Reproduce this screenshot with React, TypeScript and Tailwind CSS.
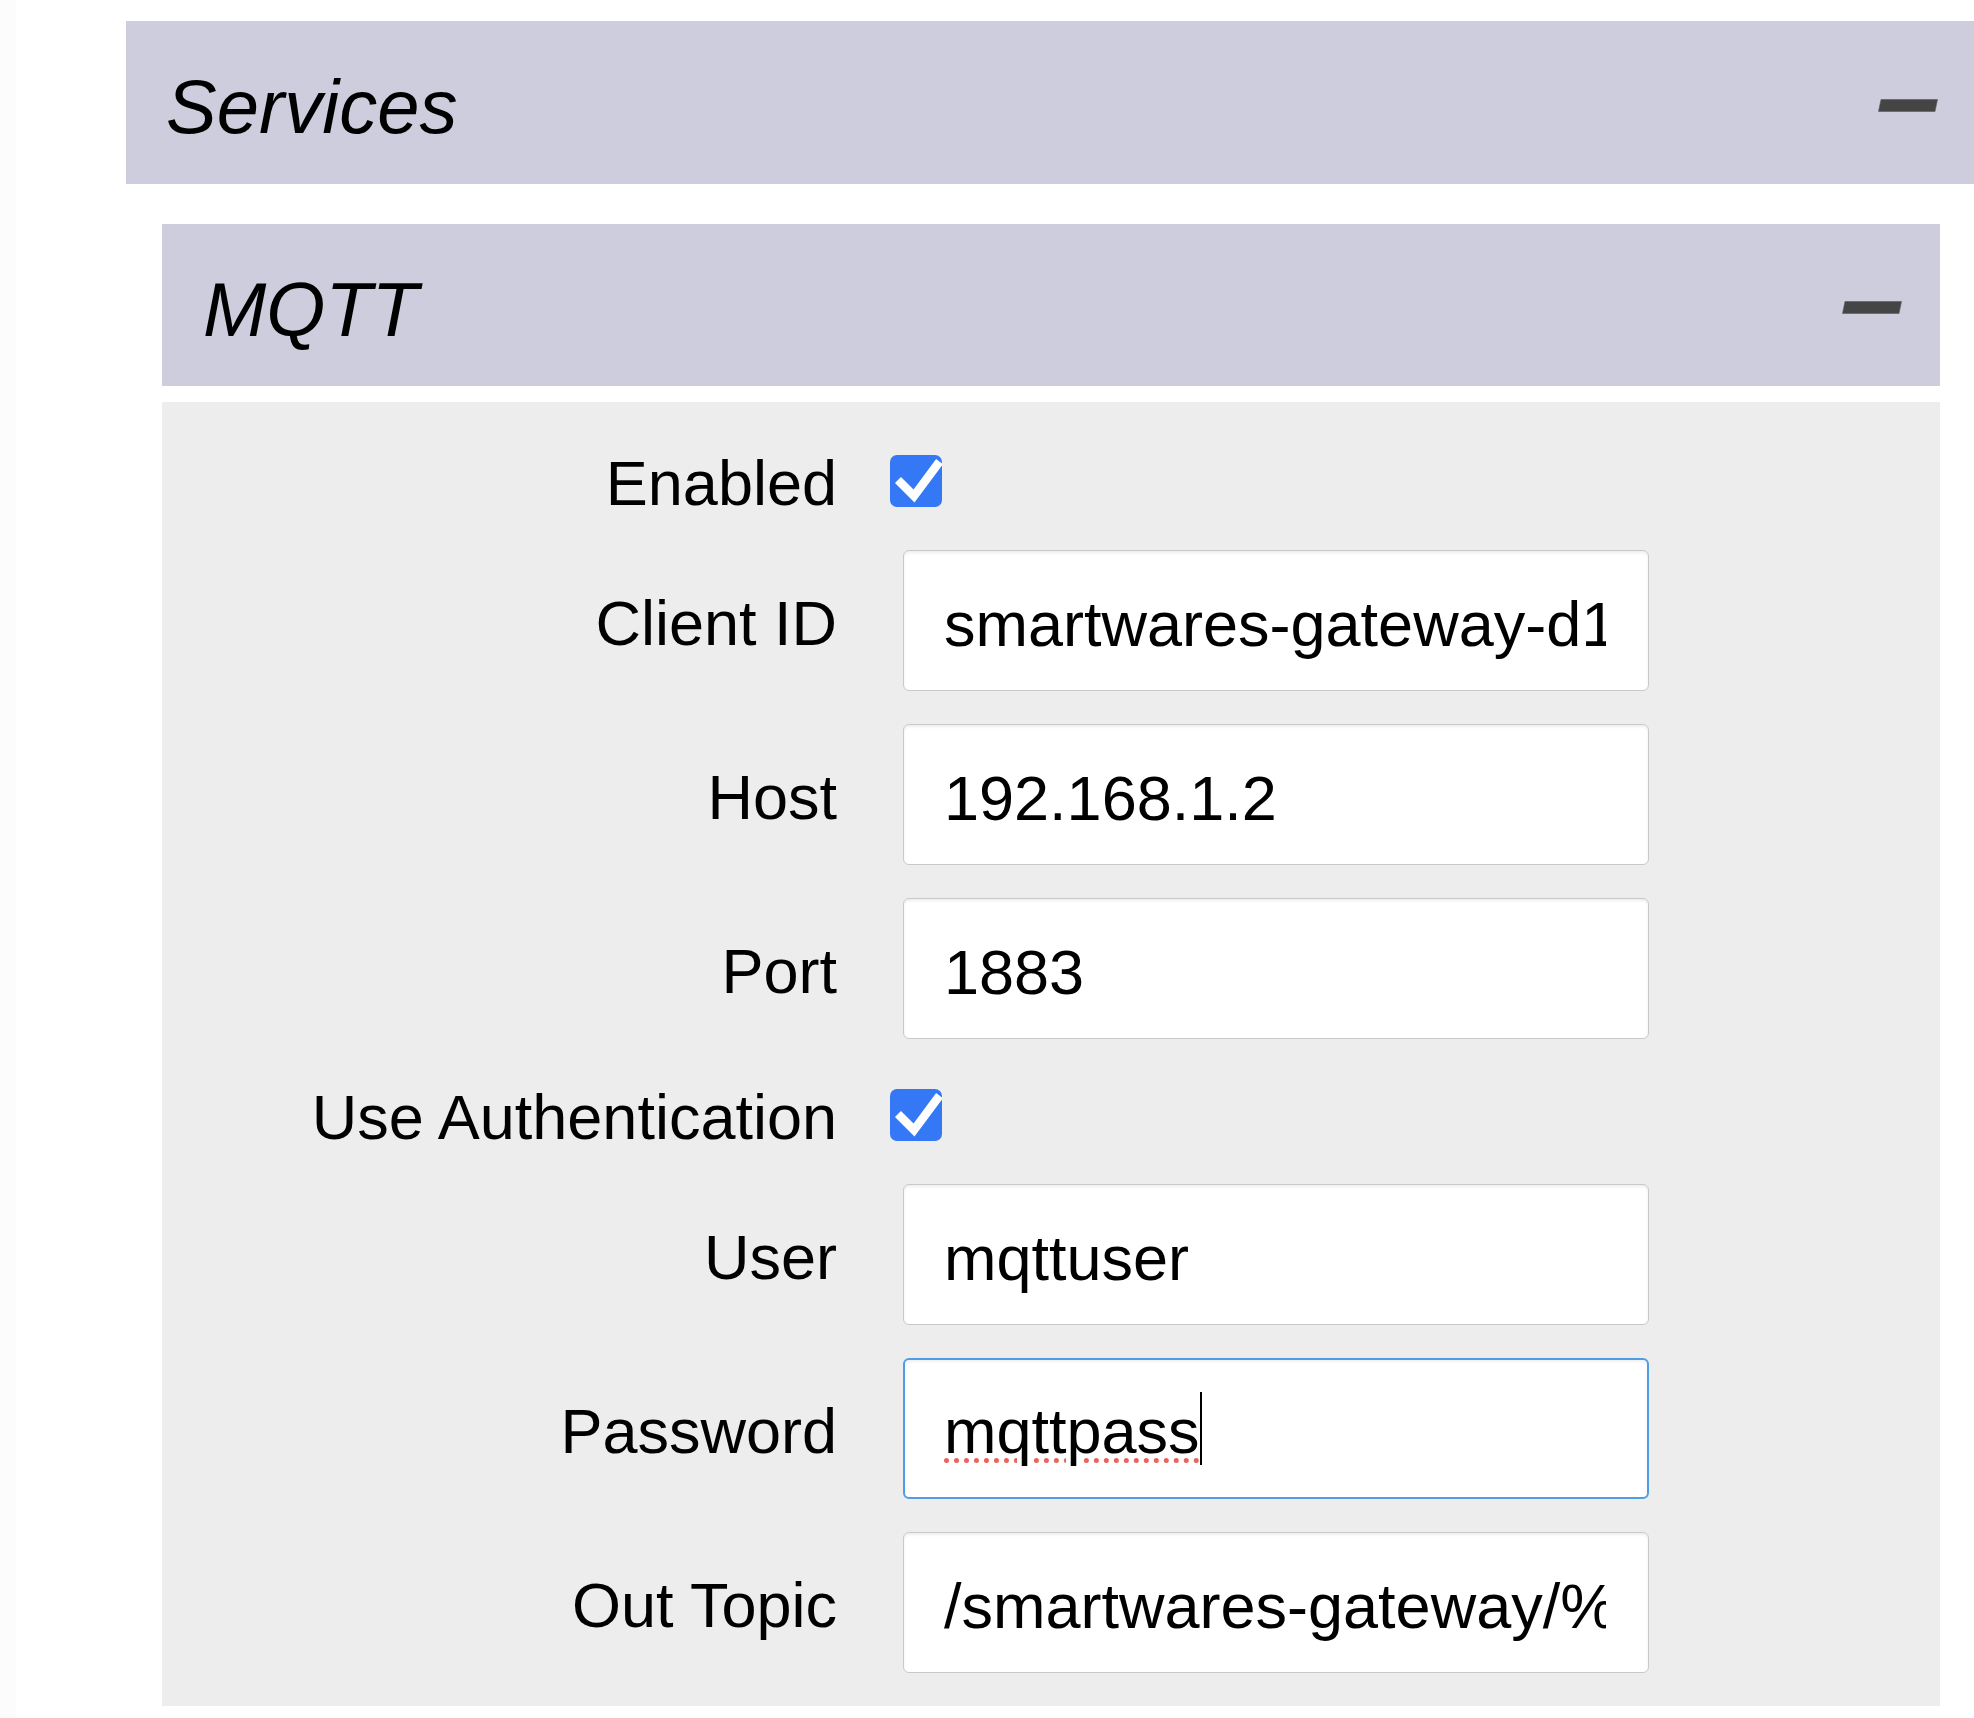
import React from "react";

const font = { fontFamily: '"Liberation Sans", Arial, Helvetica, sans-serif' };

function Minus() {
  return (
    <svg width="60" height="13" viewBox="0 0 60 13" className="shrink-0">
      <polygon points="3,0.5 59.5,0.5 57,12.5 0.5,12.5" fill="#454545" stroke="#5a5a5a" strokeWidth="0.6" strokeLinejoin="round" />
    </svg>
  );
}

function Check() {
  return (
    <div className="mt-[7px] w-[52px] h-[52px] rounded-[7px] bg-[#3478f6] flex items-center justify-center shrink-0">
      <svg width="52" height="52" viewBox="0 0 52 52">
        <polyline points="11,34 24,47 47,16" fill="none" stroke="#ffffff" strokeWidth="8.5" strokeLinecap="square" strokeLinejoin="miter" transform="translate(0,-6)" />
      </svg>
    </div>
  );
}

function CheckRow({ label }: { label: string }) {
  return (
    <div className="flex items-center h-[79px]">
      <div className="w-[675px] text-right text-[63px] leading-[1.15] text-black pt-[12px]">{label}</div>
      <div className="ml-[53px]">
        <Check />
      </div>
    </div>
  );
}

function InputRow({ label, value }: { label: string; value: string }) {
  return (
    <div className="flex items-center h-[141px]">
      <div className="w-[675px] text-right text-[63px] leading-[1.15] text-black pt-[6px]">{label}</div>
      <input
        readOnly
        defaultValue={value}
        spellCheck={false}
        className="ml-[66px] w-[746px] h-[141px] border border-[#c9c9c9] rounded-[6px] bg-white pl-[40px] pr-[42px] pt-[6px] text-[63px] text-black outline-none shadow-[inset_0_2px_3px_rgba(0,0,0,0.07)]"
        style={font}
      />
    </div>
  );
}

function PasswordRow() {
  return (
    <div className="flex items-center h-[141px]">
      <div className="w-[675px] text-right text-[63px] leading-[1.15] text-black pt-[6px]">Password</div>
      <div className="ml-[66px] w-[746px] h-[141px] border-2 border-[#4f9de6] rounded-[6px] bg-white pl-[39px] pt-[6px] flex items-center shadow-[inset_0_2px_3px_rgba(0,0,0,0.06)]">
        <span className="text-[63px] leading-[1.15] text-black underline decoration-dotted decoration-[#e8645c] decoration-[5px] underline-offset-[5px]">
          mqttpass
        </span>
        <span className="w-[2px] h-[73px] bg-black -mt-[6px]" />
      </div>
    </div>
  );
}

export default function App() {
  return (
    <div className="w-full min-h-[1718px] bg-white flex" style={font}>
      <div className="w-[16px] shrink-0 bg-[#fcfcfc]" />
      <div className="flex-1 pl-[110px] pt-[21px]">
        <div className="h-[163px] bg-[#cdcdde] flex items-center justify-between pl-[40px] pr-[36px]">
          <span className="italic text-[76px] leading-[1.15] text-black pt-[8px]">Services</span>
          <div className="mt-[6px]">
            <Minus />
          </div>
        </div>
        <div className="mt-[40px] ml-[36px] mr-[34px]">
          <div className="h-[162px] bg-[#cdcdde] flex items-center justify-between pl-[41px] pr-[38px]">
            <span className="italic text-[76px] leading-[1.15] text-black pt-[9px]">MQTT</span>
            <div className="mt-[4px]">
              <Minus />
            </div>
          </div>
          <div className="mt-[16px] bg-[#ededed] pt-[36px] pb-[33px] flex flex-col gap-[33px]">
            <CheckRow label="Enabled" />
            <InputRow label="Client ID" value="smartwares-gateway-d1a2b3" />
            <InputRow label="Host" value="192.168.1.2" />
            <InputRow label="Port" value="1883" />
            <CheckRow label="Use Authentication" />
            <InputRow label="User" value="mqttuser" />
            <PasswordRow />
            <InputRow label="Out Topic" value="/smartwares-gateway/%s" />
          </div>
        </div>
      </div>
    </div>
  );
}
